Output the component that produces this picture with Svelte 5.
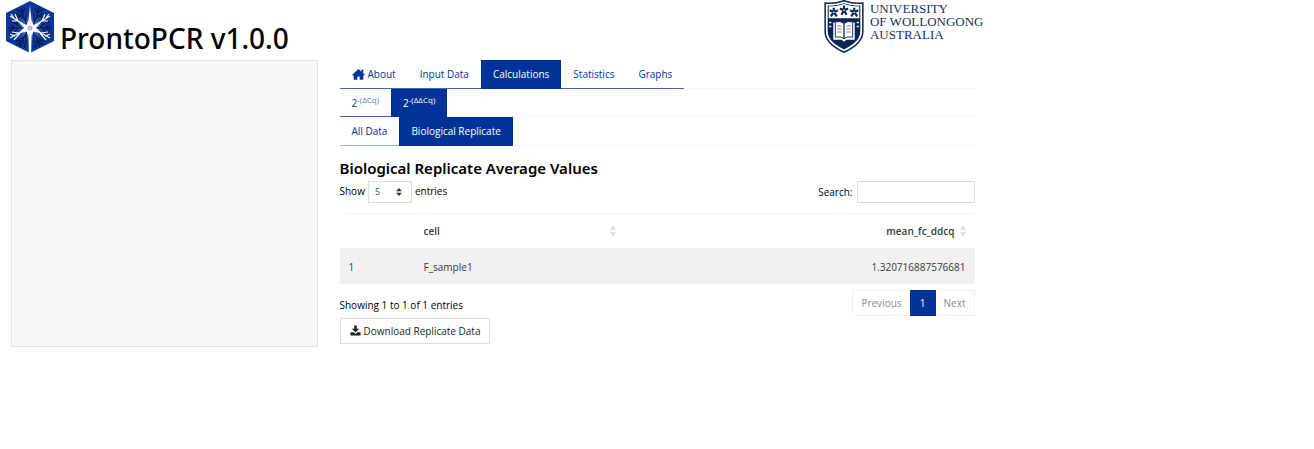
<script>
  const tabs = ['About', 'Input Data', 'Calculations', 'Statistics', 'Graphs'];
  const foldTabs = ['(ΔCq)', '(ΔΔCq)'];
  const dataTabs = ['All Data', 'Biological Replicate'];
  const rows = [{ id: 1, cell: 'F_sample1', mean: '1.320716887576681' }];

  let activeTab = $state(2);
  let activeFold = $state(1);
  let activeData = $state(1);
  let search = $state('');
  let pageSize = $state('5');

  const visible = $derived(rows.filter((r) => (r.cell + ' ' + r.mean).includes(search)));
</script>

<div class="app">
  <header>
    <svg class="mark" viewBox="0 0 48 52" aria-hidden="true">
      <defs>
        <radialGradient id="glow">
          <stop offset="0" stop-color="#a9c3f2" />
          <stop offset=".4" stop-color="#3f6ac2" />
          <stop offset="1" stop-color="#0a3a9c" stop-opacity="0" />
        </radialGradient>
      </defs>
      <path d="M24 0 48 12V40L24 52 0 40V12Z" fill="#0a3799" />
      <circle cx="24" cy="27" r="18" fill="url(#glow)" />
      <g fill="none" stroke="#07184a" stroke-width="1.1">
        <path d="M21 24 17 15 15 6M18 17 12 13 8 13M16 13 19 7M17 15 11 16M15 11 11 8M20 20 20 13M27 24 31 15 33 6M30 17 36 13 40 13M32 13 29 7M31 15 37 16M33 11 37 8M28 20 28 13" />
        <path d="M19 27H2M15 27 9 22 4 21M12 27 8 32 3 33M8 27 4 30M9 27 5 24M12 24 10 20M29 27H46M33 27 39 22 44 21M36 27 40 32 45 33M40 27 44 30M39 27 43 24M36 24 38 20" />
        <path d="M21 31 17 38 14 46M18 36 11 40 8 40M16 40 10 44M17 38 19 47M20 33 20 42M14 39 13 44M27 31 31 38 34 46M30 36 37 40 40 40M32 40 38 44M31 38 29 47M28 33 28 42M34 39 35 44" />
      </g>
      <g fill="none" stroke="#f5f8ff" stroke-width="1.2">
        <path d="M22 26 12 20 4 15M13 20 6 20M12 20 9 13M8 17 5 13M26 26 36 20 44 15M35 20 42 20M36 20 39 13M40 17 43 13" />
        <path d="M22 28 13 32 4 37M13 32 6 31M14 32 8 39M9 35 4 33M26 28 35 32 44 37M35 32 42 31M34 32 40 39M39 35 44 33" />
      </g>
      <path d="M24 4 25.5 20 28 24.500 36 20 30 27 36 32.500 27.500 30.500 25.500 35 25.200 52H22.800L22.500 35 20.500 30.500 12 32.500 18 27 12 20 20 24.500 22.500 20Z" fill="#fff" />
      <circle cx="24" cy="27" r="2" fill="#b9cdf3" stroke="#789bdd" stroke-width=".8" />
    </svg>
    <h1>ProntoPCR v1.0.0</h1>
    <div class="university">
      <svg class="crest" viewBox="0 0 39 52" aria-hidden="true">
        <path d="M1 3Q10 4 19.500 .7Q29 4 38 3V31Q38 43 19.500 51.300Q1 43 1 31Z" fill="#fff" stroke="#10285a" stroke-width="1.5" />
        <path d="M3.500 5.500Q12 6 19.500 3.300Q27 6 35.500 5.500V31Q35.500 41 19.500 48.500Q3.500 41 3.500 31Z" fill="#0c2455" />
        <path d="M4.500 6.500Q12 6.500 19.500 4Q27 6.500 34.500 6.500V18H4.500Z" fill="#fff" />
        <g fill="none" stroke="#10285a" stroke-width="2.200">
          <path d="M9.500 12V7.500M9.500 12 5.500 10M9.500 12 13.500 10M9.500 12 6.500 16M9.500 12 12.500 16M19.500 10V5.500M19.500 10 15.500 8.500M19.500 10 23.500 8.500M19.500 10 17 14.500M19.500 10 22 14.500M29.500 12V7.500M29.500 12 25.500 10M29.500 12 33.500 10M29.500 12 26.500 16M29.500 12 32.500 16" />
        </g>
        <g fill="#fff"><circle cx="9.500" cy="12" r=".8" /><circle cx="19.500" cy="10" r=".8" /><circle cx="29.500" cy="12" r=".8" /></g>
        <path d="M9 22H17L19.500 24 22 22H30V39H22L19.500 41 17 39H9Z" fill="#fff" />
        <path d="M11 21.500Q16 20 19.500 23Q23 20 28 21.500V36.500Q23 35 19.500 38Q16 35 11 36.500Z" fill="#fff" stroke="#10285a" stroke-width=".9" />
        <path d="M19.500 23V38" stroke="#10285a" stroke-width="1.300" />
        <path d="M13 25.500H17M13 28.500H17M13 31.500H17M22 25.500H26M22 28.500H26M22 31.500H26" fill="none" stroke="#7482a2" stroke-width="1" />
        <path d="M5 22h2M5 26h2M32 22h2M32 26h2" stroke="#fff" stroke-width="1.500" />
      </svg>
      <div class="uni-name">UNIVERSITY<br />OF WOLLONGONG<br />AUSTRALIA</div>
    </div>
  </header>

  <div class="columns">
    <aside></aside>
    <main>
      <nav class="tabs" aria-label="Sections">
        {#each tabs as tab, i}
          <button type="button" class:active={activeTab === i} onclick={() => (activeTab = i)}>
            {#if i === 0}
              <svg class="home" viewBox="0 0 14 12" aria-hidden="true">
                <path d="M7 .4 13.600 6.200 12.900 7 12 6.300V11.500H8.500V8H5.500V11.500H2V6.300L1.100 7 .4 6.200ZM10.300 1H12V4L10.300 2.600Z" fill="currentColor" stroke="currentColor" stroke-width=".5" stroke-linejoin="round" />
              </svg>
            {/if}{tab}
          </button>
        {/each}
      </nav>
      <nav class="tabs" aria-label="Fold change">
        {#each foldTabs as tab, i}
          <button type="button" class:active={activeFold === i} onclick={() => (activeFold = i)}>
            <span>2<sup>-{tab}</sup></span>
          </button>
        {/each}
      </nav>
      <nav class="tabs pale" aria-label="Data level">
        {#each dataTabs as tab, i}
          <button type="button" class:active={activeData === i} onclick={() => (activeData = i)}>{tab}</button>
        {/each}
      </nav>

      <h2>Biological Replicate Average Values</h2>

      <div class="bar">
        <label class="length">
          Show
          <span class="select">
            <select bind:value={pageSize}>
              <option>5</option>
              <option>10</option>
              <option>25</option>
            </select>
            <svg viewBox="0 0 6 8" aria-hidden="true"><path d="M3 0 6 3.200H0ZM0 4.800H6L3 8Z" fill="#343a40" /></svg>
          </span>
          entries
        </label>
        <label class="search">Search: <input type="text" bind:value={search} /></label>
      </div>

      <table>
        <thead>
          <tr>
            <th class="index"></th>
            <th class="cell"><span>cell {@render sort()}</span></th>
            <th class="mean"><span>mean_fc_ddcq {@render sort()}</span></th>
          </tr>
        </thead>
        <tbody>
          {#each visible as row}
            <tr>
              <td>{row.id}</td>
              <td>{row.cell}</td>
              <td class="number">{row.mean}</td>
            </tr>
          {/each}
        </tbody>
      </table>

      <div class="bar foot">
        <div class="info">Showing 1 to 1 of 1 entries</div>
        <nav class="pages" aria-label="Pagination">
          <button type="button" class="muted">Previous</button>
          <button type="button" class="current">1</button>
          <button type="button" class="muted">Next</button>
        </nav>
      </div>

      <button type="button" class="download">
        <svg viewBox="0 0 12 12" aria-hidden="true">
          <path d="M4.600 .5H7.400V4.200H10L6 8.200 2 4.200H4.600Z" fill="#212529" />
          <path d="M.5 8H4L6 9.700 8 8H11.500V11.500H.5Z" fill="#212529" />
        </svg>
        Download Replicate Data
      </button>
    </main>
  </div>
</div>

{#snippet sort()}
  <svg class="sort" viewBox="0 0 6 12" aria-hidden="true"><path d="M3 0 6 5H0ZM0 7H6L3 12Z" fill="#dedede" /></svg>
{/snippet}

<style>
  :global(body) {
    margin: 0;
    background: #fff;
  }
  .app {
    width: 75%;
    color: #000;
    font: 10px/16px 'Open Sans', 'Noto Sans', sans-serif;
  }
  .app * {
    box-sizing: border-box;
  }
  button,
  input,
  select {
    font: inherit;
    margin: 0;
    border-radius: 0;
  }
  header {
    display: flex;
    height: 60px;
    padding: 0 2px 0 6px;
  }
  .mark {
    width: 48px;
    height: 52px;
    margin-top: 1px;
  }
  h1 {
    margin: 20px 0 0 6px;
    font-family: 'Noto Sans', 'Open Sans', sans-serif;
    font-size: 28px;
    line-height: 36px;
    font-weight: 500;
  }
  .university {
    display: flex;
    gap: 6px;
    margin-left: auto;
  }
  .crest {
    width: 40px;
    height: 53px;
  }
  .uni-name {
    padding-top: 2px;
    color: #1b3160;
    font: 13px/13px 'Liberation Serif', serif;
    white-space: nowrap;
  }
  .columns {
    display: grid;
    grid-template-columns: 1fr 2fr;
  }
  aside {
    min-height: 287px;
    margin: 0 11px;
    background: #f7f7f7;
    border: 1px solid #e3e3e3;
  }
  main {
    padding: 0 11px;
  }
  .tabs {
    display: flex;
    height: 28px;
    box-shadow: inset 0 -1px #f6f6f6;
  }
  .tabs:first-child {
    height: 29px;
  }
  .tabs.pale {
    height: 29px;
  }
  .tabs button {
    display: flex;
    align-items: center;
    gap: 3px;
    padding: 0 12px;
    color: #039;
    background: transparent;
    border: 0;
    border-bottom: 1px solid #4068b3;
    white-space: nowrap;
  }
  .tabs.pale button {
    border-color: #a6b9dc;
  }
  .tabs button.active {
    color: #fff;
    background: #039;
    border-color: #039;
    font-weight: 500;
  }
  .home {
    width: 13px;
    height: 11px;
  }
  sup {
    font-size: 8px;
    line-height: 0;
    vertical-align: 4px;
  }
  .tabs button:not(.active) sup {
    color: #5b7bb8;
  }
  h2 {
    margin: 12px 0 3px;
    font-family: 'Noto Sans', 'Open Sans', sans-serif;
    font-size: 15px;
    line-height: 20px;
    font-weight: 600;
  }
  .bar {
    display: flex;
    justify-content: space-between;
  }
  label {
    display: flex;
    gap: 3px;
    line-height: 20px;
  }
  .select {
    position: relative;
    display: flex;
  }
  .select svg {
    position: absolute;
    right: 10px;
    top: 7px;
    width: 6px;
    height: 8px;
    pointer-events: none;
  }
  select {
    width: 44px;
    height: 22px;
    padding: 0 6px;
    appearance: none;
    color: #495057;
    background: #fff;
    border: 1px solid #dcdce0;
    font-size: 9px;
  }
  .search {
    gap: 4px;
    line-height: 22px;
  }
  input {
    width: 118px;
    height: 22px;
    padding: 0 6px;
    background: #fff;
    border: 1px solid #dcdce0;
  }
  table {
    width: 100%;
    margin-top: 10px;
    border-collapse: collapse;
    table-layout: fixed;
    color: #373a3c;
  }
  th,
  td {
    padding: 0 9px;
    text-align: left;
  }
  th {
    height: 34px;
    border-top: 1px solid #f4f4f4;
    font-weight: 600;
  }
  th span {
    display: flex;
    align-items: center;
    justify-content: space-between;
  }
  .index {
    width: 75px;
  }
  .cell {
    width: 210px;
  }
  .mean span {
    justify-content: flex-end;
    gap: 5px;
  }
  .sort {
    width: 6px;
    height: 12px;
  }
  td {
    height: 36px;
    padding-top: 2px;
    background: #f1f1f1;
  }
  .number {
    text-align: right;
  }
  .foot {
    margin-top: 6px;
  }
  .info {
    padding-top: 7px;
  }
  .pages {
    display: flex;
  }
  .pages button {
    height: 26px;
    padding: 0 8px;
    color: #868e96;
    background: #fff;
    border: 1px solid #f1f1f1;
  }
  .pages .current {
    min-width: 26px;
    color: #fff;
    background: #039;
    border-color: #039;
  }
  .pages .muted:first-child {
    border-right: 0;
  }
  .pages .muted:last-child {
    border-left: 0;
  }
  .download {
    display: flex;
    align-items: center;
    gap: 3px;
    height: 26px;
    margin-top: 2px;
    padding: 0 9px;
    color: #212529;
    background: #fff;
    border: 1px solid #dcdcdc;
    white-space: nowrap;
  }
  .download svg {
    width: 11px;
    height: 11px;
  }
</style>
